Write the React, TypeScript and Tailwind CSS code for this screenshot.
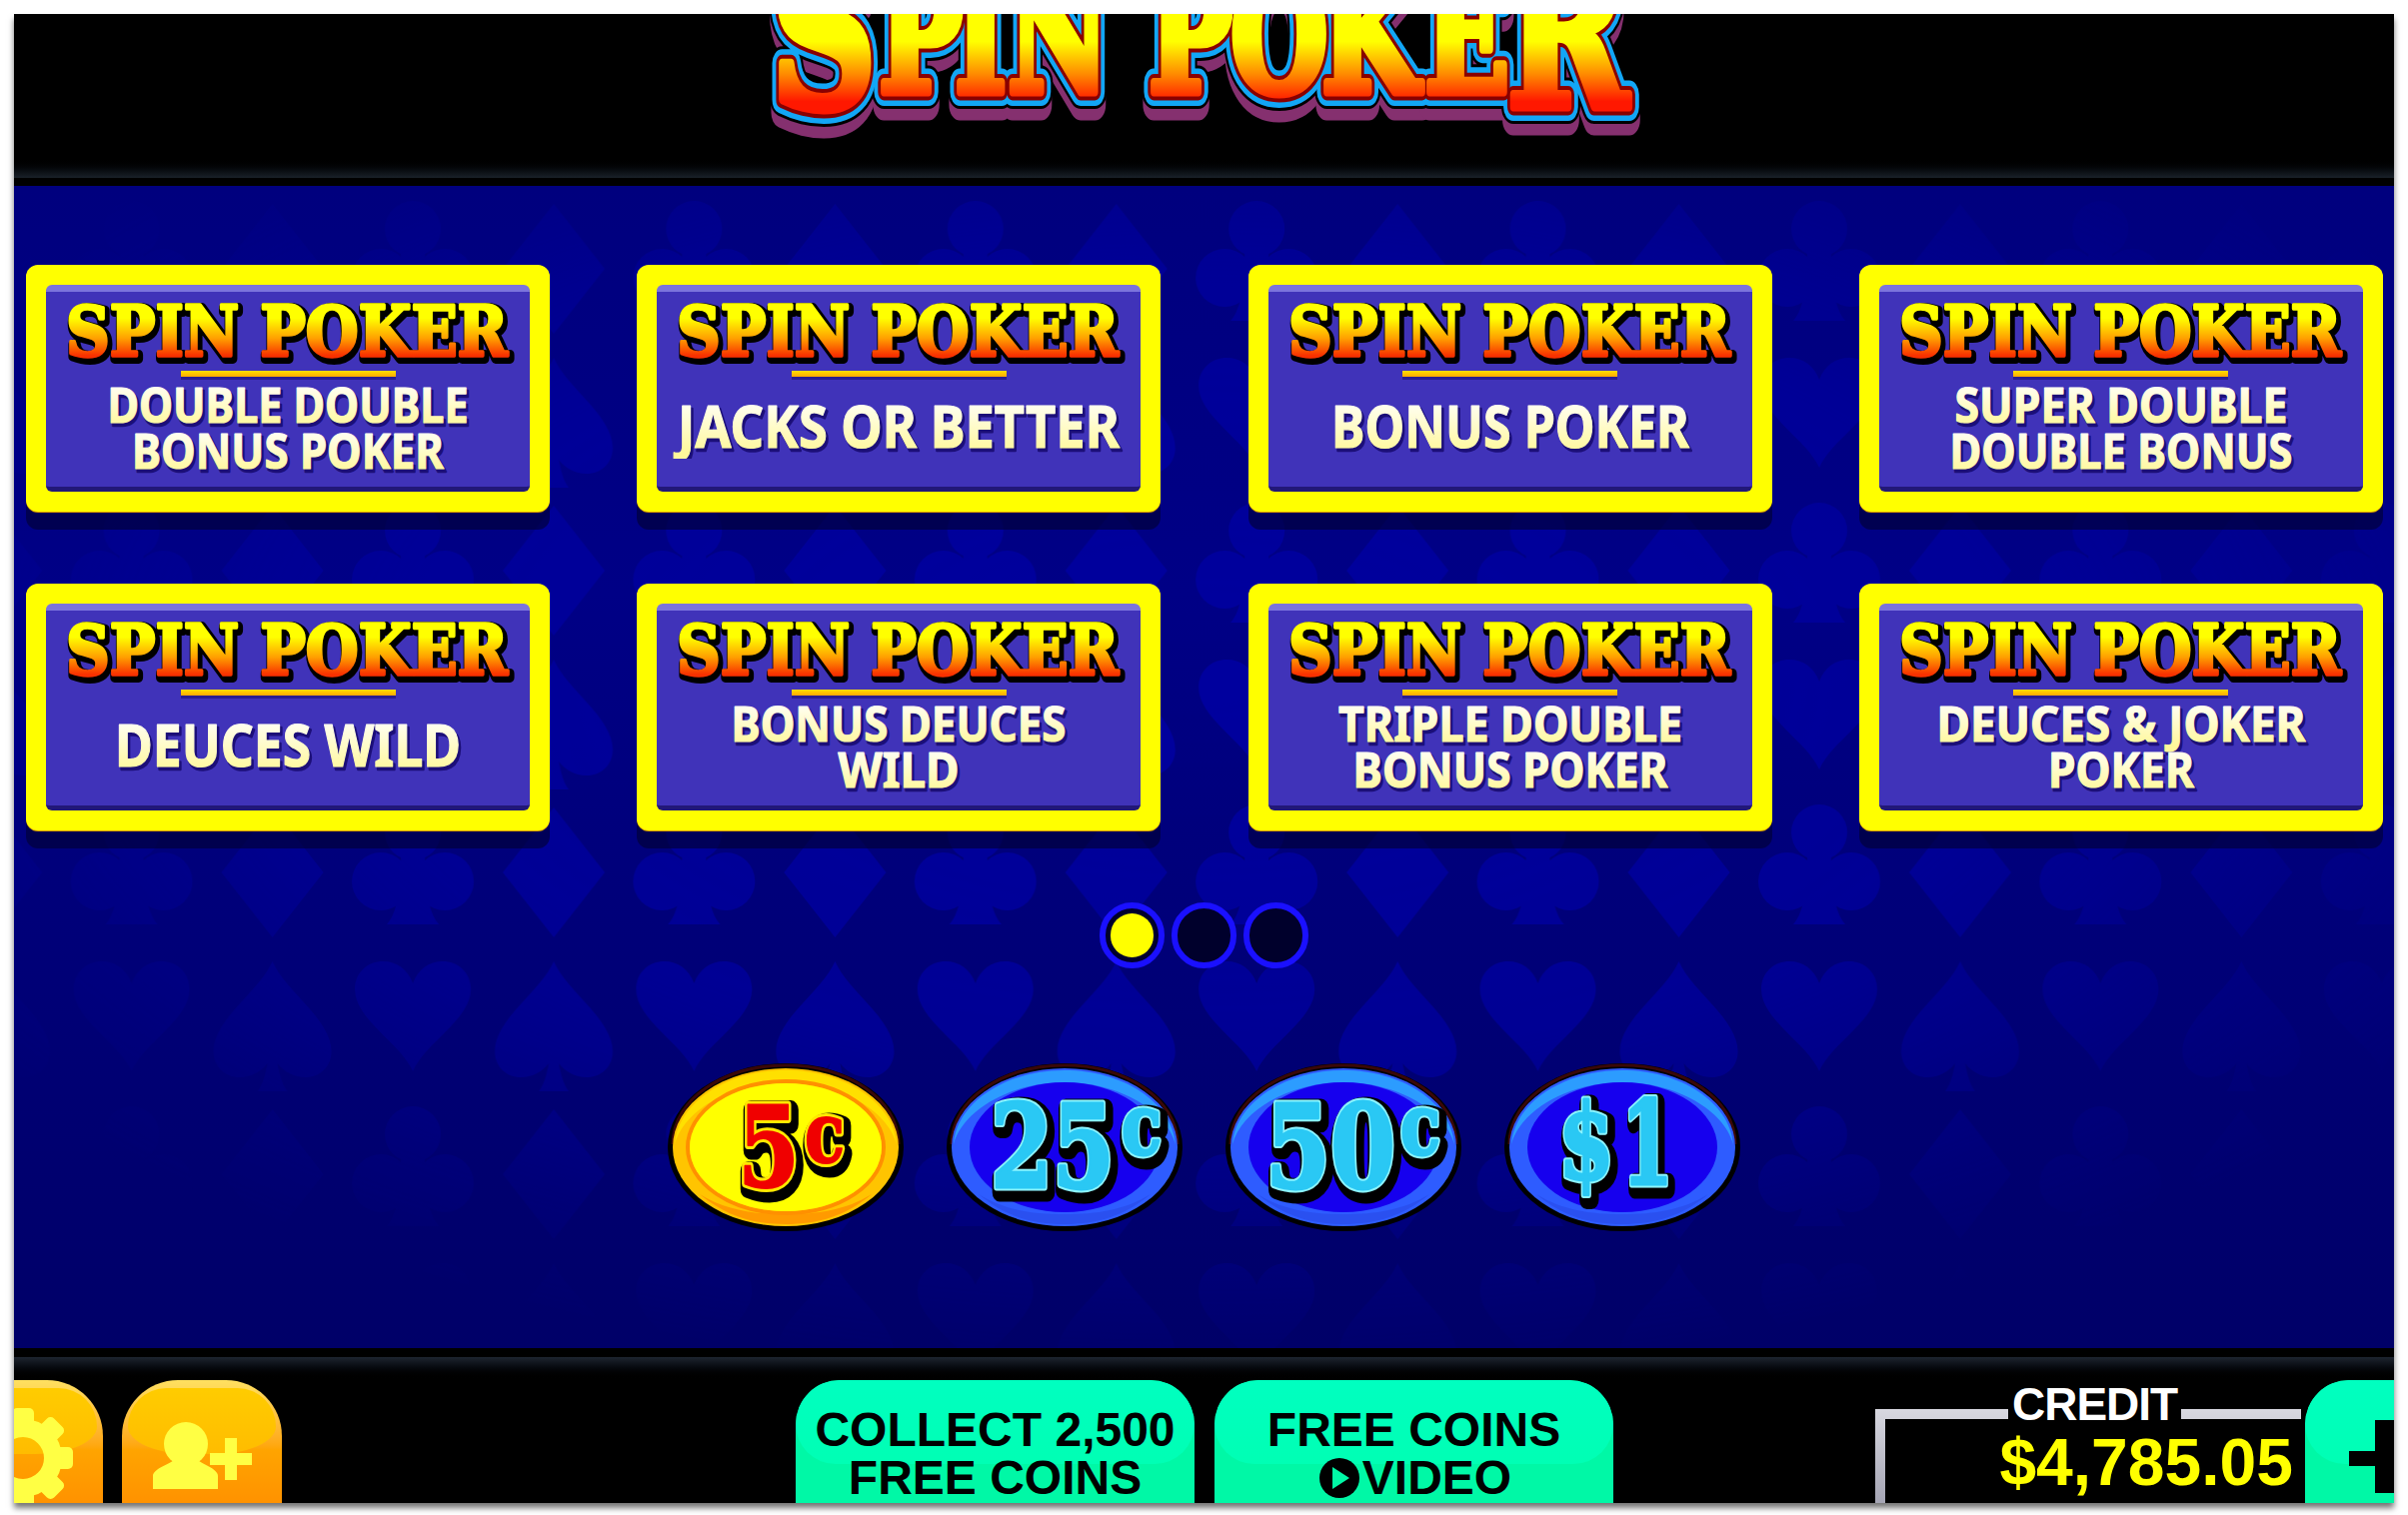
const SERIF = "'DejaVu Serif', 'Liberation Serif', serif";
const SANS = "'Noto Sans', 'Liberation Sans', sans-serif";

const games = [
  { lines: [{ text: "DOUBLE DOUBLE", w: 361 }, { text: "BONUS POKER", w: 312 }] },
  { lines: [{ text: "JACKS OR BETTER", w: 442 }] },
  { lines: [{ text: "BONUS POKER", w: 358 }] },
  { lines: [{ text: "SUPER DOUBLE", w: 333 }, { text: "DOUBLE BONUS", w: 343 }] },
  { lines: [{ text: "DEUCES WILD", w: 346 }] },
  { lines: [{ text: "BONUS DEUCES", w: 335 }, { text: "WILD", w: 121 }] },
  { lines: [{ text: "TRIPLE DOUBLE", w: 344 }, { text: "BONUS POKER", w: 315 }] },
  { lines: [{ text: "DEUCES & JOKER", w: 369 }, { text: "POKER", w: 146 }] },
];

const SX = 0.7;
const logoLayers = [
  { dy: 13, stroke: "#85306f", w: 31 },
  { dy: 0, stroke: "#000000", w: 34 },
  { dy: 0, stroke: "#12a6f6", w: 28 },
  { dy: 0, stroke: "#8a0000", w: 17 },
  { dy: 0, stroke: "url(#logoFill)", w: 9 },
];

function Logo() {
  const body = [124, 200, 253, 353, 394, 476, 567, 670].map((x) => x / SX).join(" ");
  const glyphs = (
    <>
      <tspan x={16 / SX} y={93} fontSize={210}>S</tspan>
      <tspan x={body} y={78}>PIN POKE</tspan>
      <tspan x={752 / SX} y={93} fontSize={210}>R</tspan>
    </>
  );
  return (
    <svg width={900} height={140} viewBox="0 0 900 140" className="block">
      <defs>
        <linearGradient id="logoFill" gradientUnits="userSpaceOnUse" x1="0" y1="0" x2="0" y2="92">
          <stop offset="0.3" stopColor="#ffff00" />
          <stop offset="0.65" stopColor="#ff8c00" />
          <stop offset="0.95" stopColor="#ff1800" />
        </linearGradient>
      </defs>
      <g fontFamily={SERIF} fontWeight={700} fontSize={160} strokeLinejoin="round">
        {logoLayers.map((l, i) => (
          <text key={i} transform={`translate(0 ${l.dy}) scale(${SX} 1)`} fill={l.stroke} stroke={l.stroke} strokeWidth={l.w}>
            {glyphs}
          </text>
        ))}
      </g>
    </svg>
  );
}

function CardTitle({ id }: { id: string }) {
  return (
    <svg width={462} height={68} viewBox="0 0 462 68" className="block shrink-0">
      <defs>
        <linearGradient id={id} gradientUnits="userSpaceOnUse" x1="0" y1="4" x2="0" y2="54">
          <stop offset="0.25" stopColor="#ffff00" />
          <stop offset="0.65" stopColor="#ffa000" />
          <stop offset="1" stopColor="#f83000" />
        </linearGradient>
      </defs>
      <g fontFamily={SERIF} fontWeight={700} fontSize={70} strokeLinejoin="round">
        <text x={9} y={54} textLength={442} lengthAdjust="spacingAndGlyphs" fill="#000" stroke="#000" strokeWidth={10} transform="translate(2 3)">SPIN POKER</text>
        <text x={9} y={54} textLength={442} lengthAdjust="spacingAndGlyphs" fill={`url(#${id})`} stroke={`url(#${id})`} strokeWidth={3.5}>SPIN POKER</text>
      </g>
    </svg>
  );
}

function CardLabel({ id, lines }: { id: string; lines: { text: string; w: number }[] }) {
  const two = lines.length === 2;
  const size = two ? 49 : 60;
  const pitch = 46;
  const height = two ? 92 : 60;
  const base = two ? 40 : 49;
  return (
    <svg width={460} height={height} viewBox={`0 0 460 ${height}`} className="block">
      <defs>
        <linearGradient id={id} x1="0" y1="0" x2="0" y2="1">
          <stop offset="0.15" stopColor="#ffffff" />
          <stop offset="0.85" stopColor="#fff89a" />
        </linearGradient>
      </defs>
      <g fontFamily={SANS} fontWeight={700} fontSize={size} textAnchor="middle" strokeLinejoin="round">
        {lines.map((l, i) => (
          <g key={l.text}>
            <text x={230} y={base + i * pitch + 3} dx={2} textLength={l.w} lengthAdjust="spacingAndGlyphs" fill="#1c0f78" stroke="#1c0f78" strokeWidth={2.5}>{l.text}</text>
            <text x={230} y={base + i * pitch} textLength={l.w} lengthAdjust="spacingAndGlyphs" fill={`url(#${id})`} stroke={`url(#${id})`} strokeWidth={1.2}>{l.text}</text>
          </g>
        ))}
      </g>
    </svg>
  );
}

function GameCard({ index, lines }: { index: number; lines: { text: string; w: number }[] }) {
  return (
    <button className="w-[524px] h-[247px] p-[20px] rounded-[12px] bg-[#ffff00] shadow-[0_1px_0_#d89a00,0_18px_0_rgba(0,0,50,0.62)]">
      <div className="h-full flex flex-col items-center rounded-[6px] bg-[#4033b9] border-t-[7px] border-t-[#7c74dc] border-b-[5px] border-b-[#221878] pt-[10px]">
        <CardTitle id={`cardTitle${index}`} />
        <div className="w-[215px] h-[6px] mt-[1px] shrink-0 bg-linear-to-b from-[#ffe000] to-[#ffa800] shadow-[0_3px_0_#2a1e90]" />
        <div className="flex-1 flex items-center justify-center pb-[6px]">
          <CardLabel id={`cardLabel${index}`} lines={lines} />
        </div>
      </div>
    </button>
  );
}

function SuitBackdrop() {
  return (
    <svg className="absolute inset-0 w-full h-full" aria-hidden="true">
      <defs>
        <pattern id="suits" width="281.4" height="302" patternUnits="userSpaceOnUse" patternTransform="translate(47.6 172)">
          <g fill="#00009e">
            {/* heart */}
            <path d="M70 110C58 82 12 58 12 28C12 10 26 0 40 0C54 0 65 8 70 22C75 8 86 0 100 0C114 0 128 10 128 28C128 58 82 82 70 110Z" />
            {/* spade */}
            <path d="M211 0C224 30 270 58 270 90C270 106 258 116 244 116C232 116 222 110 216 102C218 112 220 122 226 130H196C202 122 204 112 206 102C200 110 190 116 178 116C164 116 152 106 152 90C152 58 198 30 211 0Z" />
            {/* club */}
            <circle cx="70" cy="173" r="28" />
            <circle cx="38" cy="222" r="29" />
            <circle cx="102" cy="222" r="29" />
            <path d="M58 185H82V215C84 240 88 256 96 265H44C52 256 56 240 58 215Z" />
            {/* diamond */}
            <path d="M211 148L262 213L211 278L160 213Z" />
          </g>
        </pattern>
        <radialGradient id="suitFade" cx="0.5" cy="0.42" r="0.62">
          <stop offset="0" stopColor="#fff" stopOpacity="1" />
          <stop offset="0.55" stopColor="#fff" stopOpacity="0.75" />
          <stop offset="0.85" stopColor="#fff" stopOpacity="0.2" />
          <stop offset="1" stopColor="#fff" stopOpacity="0" />
        </radialGradient>
        <mask id="suitMask">
          <rect width="100%" height="100%" fill="url(#suitFade)" />
        </mask>
      </defs>
      <g mask="url(#suitMask)">
        <rect width="100%" height="100%" fill="url(#suits)" />
      </g>
    </svg>
  );
}

function PageDots() {
  return (
    <div className="flex gap-[7px] justify-center mt-[72px]">
      {[true, false, false].map((on, i) => (
        <div key={i} className="w-[65px] h-[66px] rounded-full border-[6px] border-[#1a10ff] bg-[#00002c] flex items-center justify-center">
          {on && <div className="w-[43px] h-[44px] rounded-full bg-[#ffff00]" />}
        </div>
      ))}
    </div>
  );
}

type ChipPart = { text: string; x: number; w: number; y: number; size: number };

const chips: { active?: boolean; parts: ChipPart[] }[] = [
  { active: true, parts: [{ text: "5", x: 68, w: 62, y: 122, size: 112 }, { text: "c", x: 135, w: 40, y: 98, size: 84 }] },
  { parts: [{ text: "25", x: 42, w: 124, y: 123, size: 116 }, { text: "c", x: 173, w: 40, y: 90, size: 84 }] },
  { parts: [{ text: "50", x: 38, w: 130, y: 123, size: 116 }, { text: "c", x: 173, w: 40, y: 90, size: 84 }] },
  { parts: [{ text: "$", x: 52, w: 56, y: 115, size: 104 }, { text: "1", x: 115, w: 52, y: 120, size: 116 }] },
];

function Chip({ active, parts }: { active?: boolean; parts: ChipPart[] }) {
  const glyph = active ? "#f00000" : "#2ac8f4";
  const edge = active ? "#ffe800" : "#8cf4ff";
  return (
    <svg width={233} height={165} viewBox="0 0 233 165" className="block overflow-visible">
      <ellipse cx={116} cy={83} rx={118} ry={84} fill="#000" />
      <path d="M3 80C3 34 56 1 116 1C176 1 229 34 229 80" fill="none" stroke="#3a0808" strokeWidth={3} />
      <ellipse cx={116} cy={83} rx={113} ry={79} fill={active ? "#ffc400" : "#2e5cff"} />
      <path d="M5 80C8 38 58 6 116 6C174 6 224 38 227 80C218 46 170 18 116 18C62 18 14 46 5 80Z" fill={active ? "#ffe000" : "#2c9cff"} />
      <path d="M30 130C56 152 84 160 116 160C148 160 176 152 202 130C176 146 148 150 116 150C84 150 56 146 30 130Z" fill={active ? "#ff9a00" : "#2a50f0"} />
      {active && <ellipse cx={116} cy={83} rx={98} ry={66} fill="none" stroke="#ff9000" strokeWidth={4} />}
      <ellipse cx={116} cy={83} rx={active ? 96 : 95} ry={active ? 64 : 65} fill={active ? "#ffff00" : "#1600ee"} />
      <g fontFamily={SERIF} fontWeight={700} strokeLinejoin="round">
        {parts.map((p) => (
          <text key={`a${p.text}`} x={p.x} y={p.y} fontSize={p.size} textLength={p.w} lengthAdjust="spacingAndGlyphs" fill="#000" stroke="#000" strokeWidth={19} transform="translate(3 5)">{p.text}</text>
        ))}
        {parts.map((p) => (
          <text key={`b${p.text}`} x={p.x} y={p.y} fontSize={p.size} textLength={p.w} lengthAdjust="spacingAndGlyphs" fill={edge} stroke={edge} strokeWidth={active ? 8 : 7}>{p.text}</text>
        ))}
        {parts.map((p) => (
          <text key={`c${p.text}`} x={p.x} y={p.y} fontSize={p.size} textLength={p.w} lengthAdjust="spacingAndGlyphs" fill={glyph} stroke={glyph} strokeWidth={active ? 2 : 3}>{p.text}</text>
        ))}
      </g>
    </svg>
  );
}

function Bevel() {
  return <div className="absolute left-[6px] right-[6px] top-[8px] h-[66px] rounded-b-[50%] rounded-t-[46px] bg-linear-to-b from-[#ffcc00] to-[#ffbc00]" />;
}

function GearButton() {
  const teeth = [0, 45, 90, 135, 180, 225, 270, 315];
  return (
    <div className="relative w-[160px] h-[140px] shrink-0 -ml-[71px] rounded-t-[56px] bg-linear-to-b from-[#ffe060] via-[#ffa400] via-50% to-[#ff8c00] overflow-hidden">
      <Bevel />
      <svg width={160} height={140} viewBox="0 0 160 140" className="absolute inset-0">
        <g transform="translate(80 78)" fill="#ffff44">
          {teeth.map((a) => (
            <rect key={a} x={-11} y={-50} width={22} height={20} rx={5} transform={`rotate(${a})`} />
          ))}
          <circle r={30} fill="none" stroke="#ffff44" strokeWidth={18} />
        </g>
      </svg>
    </div>
  );
}

function FriendButton() {
  return (
    <div className="relative w-[160px] h-[140px] shrink-0 ml-[19px] rounded-t-[56px] bg-linear-to-b from-[#ffe060] via-[#ffa400] via-50% to-[#ff8c00] overflow-hidden">
      <Bevel />
      <svg width={160} height={140} viewBox="0 0 160 140" className="absolute inset-0">
        <g fill="#ffff44">
          <ellipse cx={64} cy={64} rx={22} ry={22} />
          <path d="M31 109V96C31 88 50 84 54 78H74C78 84 96 88 96 96V109Z" />
          <rect x={88} y={73} width={42} height={12} />
          <rect x={103} y={58} width={12} height={42} />
        </g>
      </svg>
    </div>
  );
}

function TealButton({ className, children }: { className: string; children?: React.ReactNode }) {
  return (
    <div className={`relative h-[140px] shrink-0 rounded-t-[44px] bg-[#00f8a6] overflow-hidden ${className}`}>
      <div className="absolute inset-x-0 top-0 h-[84px] rounded-b-[40px] rounded-t-[44px] bg-linear-to-b from-[#00ffc0] to-[#00ffb4]" />
      {children}
    </div>
  );
}

function PlayMark() {
  return (
    <svg width={46} height={42} viewBox="0 0 46 42" className="shrink-0">
      <ellipse cx={23} cy={21} rx={20} ry={20} fill="#000" />
      <path d="M16 10L33 21L16 32Z" fill="#00f8a6" />
    </svg>
  );
}

function CreditBox() {
  return (
    <div className="relative w-[426px] h-[111px] mt-[29px] ml-[262px] shrink-0 pl-[10px] pt-[10px] bg-linear-to-b from-[#d8d8e0] to-[#9c9cac]">
      <div className="absolute -top-[27px] left-[133px] bg-black px-[4px] h-[44px] flex items-center font-['Liberation_Sans'] font-bold text-[46px] tracking-[-1px] text-white leading-none">
        CREDIT
      </div>
      <div className="h-full bg-black flex justify-end pr-[8px] pt-[10px] font-['Liberation_Sans'] font-bold text-[66px] leading-none text-[#ffff00]">
        $4,785.05
      </div>
    </div>
  );
}

export default function App() {
  return (
    <div className="w-[2409px] h-[1516px] bg-white pl-[14px] pt-[14px] overflow-hidden">
      <div className="w-[2381px] h-[1490px] flex flex-col overflow-hidden bg-black shadow-[0_5px_6px_rgba(0,0,0,0.55)]">
        <header className="h-[172px] shrink-0 flex flex-col">
          <div className="h-[143px] flex justify-center overflow-hidden">
            <Logo />
          </div>
          <div className="h-[21px] bg-linear-to-b from-black to-[#1a2129]" />
        </header>

        <main className="relative h-[1163px] shrink-0 overflow-hidden bg-linear-to-b from-[#00007e] via-[#000086] via-35% to-[#000068]">
          <SuitBackdrop />
          <div className="relative pt-[79px]">
            <div className="pl-[12px] pr-[11px] grid grid-cols-[524px_524px_524px_524px] justify-between gap-y-[72px]">
              {games.map((g, i) => (
                <GameCard key={i} index={i} lines={g.lines} />
              ))}
            </div>
            <PageDots />
            <div className="flex justify-center gap-[46px] mt-[96px]">
              {chips.map((c, i) => (
                <Chip key={i} active={c.active} parts={c.parts} />
              ))}
            </div>
          </div>
        </main>

        <footer className="h-[155px] shrink-0 flex flex-col bg-black overflow-hidden">
          <div className="h-[9px] shrink-0 bg-black" />
          <div className="h-[23px] shrink-0 bg-linear-to-b from-[#1e2530] to-black" />
          <div className="flex">
            <GearButton />
            <FriendButton />
            <TealButton className="w-[399px] ml-[514px]">
              <div className="relative pt-[26px] text-center font-['Liberation_Sans'] font-bold text-[48px] leading-[48px] text-black">
                <div>COLLECT 2,500</div>
                <div>FREE COINS</div>
              </div>
            </TealButton>
            <TealButton className="w-[399px] ml-[20px]">
              <div className="relative pt-[26px] text-center font-['Liberation_Sans'] font-bold text-[48px] leading-[48px] text-black">
                <div>FREE COINS</div>
                <div className="flex items-center justify-center">
                  <PlayMark />
                  <span>VIDEO</span>
                </div>
              </div>
            </TealButton>
            <CreditBox />
            <TealButton className="w-[160px] ml-[4px]">
              <svg width={90} height={140} viewBox="0 0 90 140" className="relative">
                <path d="M70 40H89V113H70V86H44V71H70Z" fill="#000" />
              </svg>
            </TealButton>
          </div>
        </footer>
      </div>
    </div>
  );
}
